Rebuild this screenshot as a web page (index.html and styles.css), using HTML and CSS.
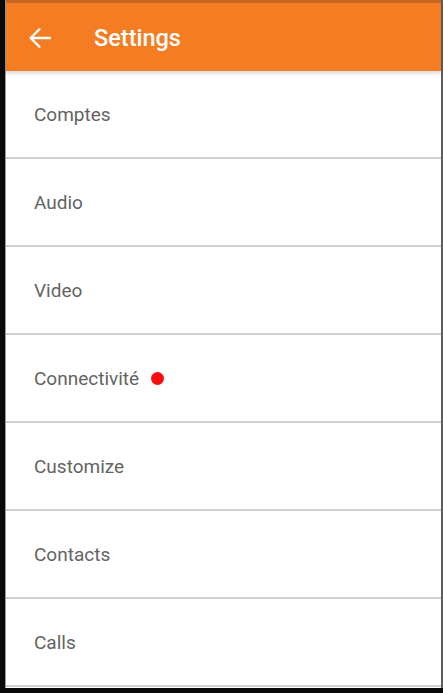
FILE: index.html
```html
<!DOCTYPE html>
<html lang="fr">
<head>
  <meta charset="UTF-8">
  <title>Settings</title>
  <link rel="stylesheet" href="styles.css">
</head>
<body>
  <div class="screen">
    <div class="toolbar">
      <svg class="back" width="28" height="28" viewBox="0 0 24 24">
        <path d="M20.5 12H4.5M11.5 4.5L4 12 11.5 19.5" fill="none" stroke="#fff" stroke-width="2.1" stroke-linecap="round" stroke-linejoin="round"/>
      </svg>
      <span class="title">Settings</span>
    </div>

    <ul class="menu">
      <li>Comptes</li>
      <li>Audio</li>
      <li>Video</li>
      <li>Connectivité <span class="dot"></span></li>
      <li>Customize</li>
      <li>Contacts</li>
      <li>Calls</li>
    </ul>
  </div>
</body>
</html>
```

FILE: styles.css
```css
html, body {
  margin: 0;
  padding: 0;
  background-color: #0a0a0a;
}
body {
  width: 443px;
  height: 693px;
  overflow: hidden;
  font-family: Roboto, "Noto Sans", sans-serif;
}
.screen {
  margin-left: 5px;
  width: 438px;
  height: 688px;
  background-color: #fff;
  border-left: 1px solid #9a9a9a;
  border-right: 2px solid #5e5e5e;
  box-sizing: border-box;
  display: flex;
  flex-direction: column;
}
.toolbar {
  height: 68px;
  flex-shrink: 0;
  border-top: 3px solid #c9661f;
  background-color: #f47c22;
  display: flex;
  align-items: center;
  color: #fff;
  box-shadow: 0 2px 4px rgba(0, 0, 0, 0.18);
  position: relative;
  z-index: 1;
}
.back {
  margin-left: 20px;
  margin-top: 1px;
}
.title {
  margin-left: 40px;
  font-size: 23.5px;
  font-weight: 500;
  margin-top: 1px;
}
.menu {
  list-style: none;
  margin: 0;
  padding: 0;
  flex: 1;
  display: flex;
  flex-direction: column;
}
.menu li {
  height: 86px;
  flex-shrink: 0;
  border-bottom: 2px solid #cfcfcf;
  display: flex;
  align-items: center;
  padding-left: 28px;
  font-size: 19px;
  color: #636363;
}
.dot {
  display: inline-block;
  width: 13px;
  height: 13px;
  border-radius: 50%;
  background-color: #f70d0d;
  margin-left: 12px;
}
```
